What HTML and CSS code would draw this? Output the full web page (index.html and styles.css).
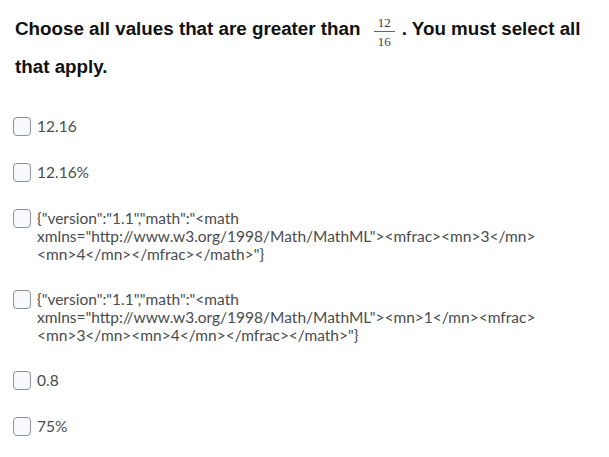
FILE: index.html
```html
<!DOCTYPE html>
<html lang="en">
<head>
<meta charset="utf-8">
<title>Question</title>
<link rel="stylesheet" href="styles.css">
</head>
<body>
<div class="question">
  <p class="prompt">Choose all values that are greater than <span class="frac"><span class="num">12</span><span class="den">16</span></span>. You must select all that apply.</p>
  <ul class="options">
    <li class="option"><span class="box"></span><span class="label">12.16</span></li>
    <li class="option"><span class="box"></span><span class="label">12.16%</span></li>
    <li class="option"><span class="box"></span><span class="label">{"version":"1.1","math":"&lt;math xmlns="http://www.w3.org/1998/Math/MathML"&gt;&lt;mfrac&gt;&lt;mn&gt;3&lt;/mn&gt;&lt;mn&gt;4&lt;/mn&gt;&lt;/mfrac&gt;&lt;/math&gt;"}</span></li>
    <li class="option"><span class="box"></span><span class="label">{"version":"1.1","math":"&lt;math xmlns="http://www.w3.org/1998/Math/MathML"&gt;&lt;mn&gt;1&lt;/mn&gt;&lt;mfrac&gt;&lt;mn&gt;3&lt;/mn&gt;&lt;mn&gt;4&lt;/mn&gt;&lt;/mfrac&gt;&lt;/math&gt;"}</span></li>
    <li class="option"><span class="box"></span><span class="label">0.8</span></li>
    <li class="option"><span class="box"></span><span class="label">75%</span></li>
  </ul>
</div>
</body>
</html>
```
FILE: styles.css
```css
html, body {
  margin: 0;
  padding: 0;
  background: #ffffff;
}

.question {
  padding: 10px 4px 0 13px;
}

.prompt {
  margin: 0;
  padding-left: 2px;
  font-family: "Liberation Sans", Arial, sans-serif;
  font-weight: bold;
  font-size: 18.8px;
  line-height: 38px;
  color: #111111;
}

.frac {
  display: inline-flex;
  flex-direction: column;
  align-items: center;
  vertical-align: 8px;
  margin: 0 7px 0 8px;
  font-family: "Liberation Serif", "Times New Roman", serif;
  font-weight: normal;
  font-size: 13px;
  line-height: 12px;
  color: #3a3a3a;
}

.frac .num {
  padding: 0 4px 2px;
  border-bottom: 1px solid #666666;
}

.frac .den {
  padding-top: 4px;
}

.options {
  list-style: none;
  margin: 31px 0 0;
  padding: 0;
  display: flex;
  flex-direction: column;
  gap: 27px;
}

.option {
  display: flex;
  align-items: flex-start;
  gap: 6px;
  font-family: Lato, "Liberation Sans", sans-serif;
  font-size: 15.5px;
  line-height: 18px;
  color: #494c4e;
}

.box {
  flex: none;
  width: 16px;
  height: 17px;
  border: 1px solid #8c9194;
  border-radius: 4px;
  background: #f8f9fc;
}

.label {
  max-width: 530px;
}
```
